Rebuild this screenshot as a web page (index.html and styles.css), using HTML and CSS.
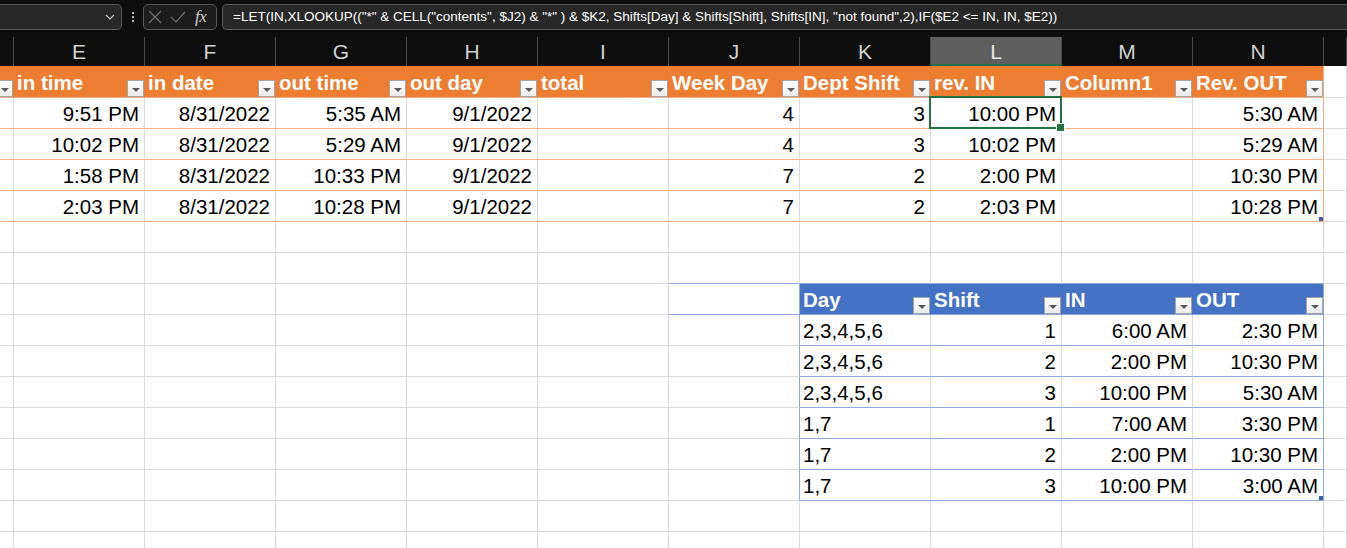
FILE: index.html
```html
<!DOCTYPE html>
<html lang="en">
<head>
<meta charset="utf-8">
<title>Sheet</title>
<link rel="stylesheet" href="styles.css">
</head>
<body>
<div class="fbar">
  <div class="namebox">
    <svg class="chev" width="10" height="6" viewBox="0 0 10 6"><path d="M1 1 L5 5 L9 1" fill="none" stroke="#c8c8c8" stroke-width="1.2"/></svg>
  </div>
  <div class="dots"><i></i><i></i><i></i></div>
  <div class="fxbox">
    <svg width="14" height="14" viewBox="0 0 14 14"><path d="M1 1 L13 13 M13 1 L1 13" stroke="#6f6f6f" stroke-width="1.2" fill="none"/></svg>
    <svg width="16" height="14" viewBox="0 0 16 14"><path d="M1 7 L6 12 L15 2" stroke="#6f6f6f" stroke-width="1.2" fill="none"/></svg>
    <span class="fx">fx</span>
  </div>
  <div class="formula">=LET(IN,XLOOKUP(("*" &amp; CELL("contents", $J2) &amp; "*" ) &amp; $K2, Shifts[Day] &amp; Shifts[Shift], Shifts[IN], "not found",2),IF($E2 &lt;= IN, IN, $E2))</div>
</div>

<div class="colhead">
  <div class="ch"></div>
  <div class="ch">E</div>
  <div class="ch">F</div>
  <div class="ch">G</div>
  <div class="ch">H</div>
  <div class="ch">I</div>
  <div class="ch">J</div>
  <div class="ch">K</div>
  <div class="ch sel">L</div>
  <div class="ch">M</div>
  <div class="ch">N</div>
  <div class="ch"></div>
</div>

<div class="sheet">
  <div class="row hrow">
    <div class="c oh"><span class="dd"></span></div>
    <div class="c oh"><span class="t">in time</span><span class="dd"></span></div>
    <div class="c oh"><span class="t">in date</span><span class="dd"></span></div>
    <div class="c oh"><span class="t">out time</span><span class="dd"></span></div>
    <div class="c oh"><span class="t">out day</span><span class="dd"></span></div>
    <div class="c oh"><span class="t">total</span><span class="dd"></span></div>
    <div class="c oh"><span class="t">Week Day</span><span class="dd"></span></div>
    <div class="c oh"><span class="t">Dept Shift</span><span class="dd"></span></div>
    <div class="c oh"><span class="t">rev. IN</span><span class="dd"></span></div>
    <div class="c oh"><span class="t">Column1</span><span class="dd"></span></div>
    <div class="c oh oe"><span class="t">Rev. OUT</span><span class="dd"></span></div>
    <div class="c"></div>
  </div>

  <div class="row orow">
    <div class="c"></div><div class="c">9:51 PM</div><div class="c">8/31/2022</div><div class="c">5:35 AM</div><div class="c">9/1/2022</div><div class="c"></div><div class="c">4</div><div class="c">3</div><div class="c cur">10:00 PM</div><div class="c"></div><div class="c oe">5:30 AM</div><div class="c"></div>
  </div>
  <div class="row orow">
    <div class="c"></div><div class="c">10:02 PM</div><div class="c">8/31/2022</div><div class="c">5:29 AM</div><div class="c">9/1/2022</div><div class="c"></div><div class="c">4</div><div class="c">3</div><div class="c">10:02 PM</div><div class="c"></div><div class="c oe">5:29 AM</div><div class="c"></div>
  </div>
  <div class="row orow">
    <div class="c"></div><div class="c">1:58 PM</div><div class="c">8/31/2022</div><div class="c">10:33 PM</div><div class="c">9/1/2022</div><div class="c"></div><div class="c">7</div><div class="c">2</div><div class="c">2:00 PM</div><div class="c"></div><div class="c oe">10:30 PM</div><div class="c"></div>
  </div>
  <div class="row orow">
    <div class="c"></div><div class="c">2:03 PM</div><div class="c">8/31/2022</div><div class="c">10:28 PM</div><div class="c">9/1/2022</div><div class="c"></div><div class="c">7</div><div class="c">2</div><div class="c">2:03 PM</div><div class="c"></div><div class="c oe grip">10:28 PM</div><div class="c"></div>
  </div>

  <div class="row">
    <div class="c"></div><div class="c"></div><div class="c"></div><div class="c"></div><div class="c"></div><div class="c"></div><div class="c"></div><div class="c"></div><div class="c"></div><div class="c"></div><div class="c"></div><div class="c"></div>
  </div>
  <div class="row">
    <div class="c"></div><div class="c"></div><div class="c"></div><div class="c"></div><div class="c"></div><div class="c"></div><div class="c bb"></div><div class="c bb"></div><div class="c bb"></div><div class="c bb"></div><div class="c bb"></div><div class="c"></div>
  </div>

  <div class="row">
    <div class="c"></div><div class="c"></div><div class="c"></div><div class="c"></div><div class="c"></div><div class="c"></div>
    <div class="c bb br"></div>
    <div class="c bh"><span class="t">Day</span><span class="dd"></span></div>
    <div class="c bh"><span class="t">Shift</span><span class="dd"></span></div>
    <div class="c bh"><span class="t">IN</span><span class="dd"></span></div>
    <div class="c bh be"><span class="t">OUT</span><span class="dd"></span></div>
    <div class="c"></div>
  </div>

  <div class="row brow">
    <div class="c"></div><div class="c"></div><div class="c"></div><div class="c"></div><div class="c"></div><div class="c"></div><div class="c j"></div><div class="c l">2,3,4,5,6</div><div class="c">1</div><div class="c">6:00 AM</div><div class="c be">2:30 PM</div><div class="c"></div>
  </div>
  <div class="row brow">
    <div class="c"></div><div class="c"></div><div class="c"></div><div class="c"></div><div class="c"></div><div class="c"></div><div class="c j"></div><div class="c l">2,3,4,5,6</div><div class="c">2</div><div class="c">2:00 PM</div><div class="c be">10:30 PM</div><div class="c"></div>
  </div>
  <div class="row brow">
    <div class="c"></div><div class="c"></div><div class="c"></div><div class="c"></div><div class="c"></div><div class="c"></div><div class="c j"></div><div class="c l">2,3,4,5,6</div><div class="c">3</div><div class="c">10:00 PM</div><div class="c be">5:30 AM</div><div class="c"></div>
  </div>
  <div class="row brow">
    <div class="c"></div><div class="c"></div><div class="c"></div><div class="c"></div><div class="c"></div><div class="c"></div><div class="c j"></div><div class="c l">1,7</div><div class="c">1</div><div class="c">7:00 AM</div><div class="c be">3:30 PM</div><div class="c"></div>
  </div>
  <div class="row brow">
    <div class="c"></div><div class="c"></div><div class="c"></div><div class="c"></div><div class="c"></div><div class="c"></div><div class="c j"></div><div class="c l">1,7</div><div class="c">2</div><div class="c">2:00 PM</div><div class="c be">10:30 PM</div><div class="c"></div>
  </div>
  <div class="row brow">
    <div class="c"></div><div class="c"></div><div class="c"></div><div class="c"></div><div class="c"></div><div class="c"></div><div class="c j"></div><div class="c l">1,7</div><div class="c">3</div><div class="c">10:00 PM</div><div class="c be grip">3:00 AM</div><div class="c"></div>
  </div>

  <div class="row">
    <div class="c"></div><div class="c"></div><div class="c"></div><div class="c"></div><div class="c"></div><div class="c"></div><div class="c"></div><div class="c"></div><div class="c"></div><div class="c"></div><div class="c"></div><div class="c"></div>
  </div>
  <div class="row">
    <div class="c"></div><div class="c"></div><div class="c"></div><div class="c"></div><div class="c"></div><div class="c"></div><div class="c"></div><div class="c"></div><div class="c"></div><div class="c"></div><div class="c"></div><div class="c"></div>
  </div>
</div>
</body>
</html>
```

FILE: styles.css
```css
* {
  box-sizing: border-box;
  margin: 0;
  padding: 0;
}

html, body {
  width: 1347px;
  height: 548px;
  overflow: hidden;
  background: #ffffff;
}

body {
  font-family: "Liberation Sans", Arial, sans-serif;
}

/* ---------- formula bar ---------- */
.fbar {
  height: 31px;
  background: #0e0e0e;
  display: flex;
  align-items: flex-start;
  padding-top: 4px;
}

.namebox {
  width: 122px;
  height: 26px;
  flex: none;
  background: #282828;
  border: 1px solid #5a5a5a;
  border-left: none;
  border-radius: 0 5px 5px 0;
  display: flex;
  align-items: center;
  justify-content: flex-end;
  padding-right: 6px;
}

.dots {
  width: 21px;
  height: 26px;
  flex: none;
  display: flex;
  flex-direction: column;
  align-items: center;
  justify-content: center;
  gap: 2px;
}

.dots i {
  display: block;
  width: 2px;
  height: 2px;
  background: #b5b5b5;
}

.fxbox {
  width: 74px;
  height: 26px;
  flex: none;
  background: #1d1d1d;
  border: 1px solid #5a5a5a;
  border-radius: 5px;
  display: flex;
  align-items: center;
  padding-left: 4px;
  gap: 8px;
}

.fx {
  font-family: "Liberation Serif", "Times New Roman", serif;
  font-style: italic;
  font-size: 17px;
  color: #d0d0d0;
  letter-spacing: -0.5px;
  margin-left: 1px;
}

.formula {
  flex: 1;
  height: 26px;
  margin-left: 5px;
  background: #282828;
  border: 1px solid #5a5a5a;
  border-right: none;
  border-radius: 5px 0 0 5px;
  color: #ffffff;
  font-size: 13.5px;
  line-height: 24px;
  padding-left: 10px;
  white-space: nowrap;
  overflow: hidden;
}

/* ---------- column headers ---------- */
.colhead {
  display: grid;
  grid-template-columns: 14px repeat(10, 131px) 1fr;
  height: 35px;
  background: #0e0e0e;
  padding-top: 6px;
}

.ch {
  height: 29px;
  border-right: 1px solid #474747;
  color: #d2d2d2;
  text-align: center;
  font-size: 21px;
  line-height: 27px;
  padding-top: 1px;
}

.ch.sel {
  background: #5f5f5f;
  border-bottom: 2px solid #217346;
  color: #e6e6e6;
}

/* ---------- sheet ---------- */
.row {
  display: grid;
  grid-template-columns: 14px repeat(10, 131px) 1fr;
  height: 31px;
}

.c {
  position: relative;
  border-right: 1px solid #dadada;
  border-bottom: 1px solid #dadada;
  display: flex;
  align-items: flex-end;
  justify-content: flex-end;
  padding: 0 5px 3px 3px;
  font-size: 20.5px;
  line-height: 23px;
  color: #000000;
  white-space: nowrap;
  overflow: hidden;
}

.c.l {
  justify-content: flex-start;
}

/* orange table */
.hrow {
  height: 32px;
}

.oh {
  background: #ed7d31;
  border-right-color: #ed7d31;
  border-bottom-color: #f4b084;
  color: #ffffff;
  font-weight: bold;
  justify-content: space-between;
  padding: 0 0 0 3px;
}

.oh:first-child {
  justify-content: flex-end;
  padding: 0;
}

.oh .t,
.bh .t {
  padding-bottom: 3px;
}

.orow .c {
  border-bottom-color: #f4b084;
}

.orow .c:last-child {
  border-bottom-color: #dadada;
}

.c.oe {
  border-right-color: #f4b084;
}

/* blue table */
.c.bb {
  border-bottom-color: #8ea9db;
}

.c.br,
.c.j {
  border-right-color: #8ea9db;
}

.bh {
  background: #4472c4;
  border-right-color: #4472c4;
  border-bottom-color: #8ea9db;
  color: #ffffff;
  font-weight: bold;
  justify-content: space-between;
  padding: 0 0 0 3px;
}

.brow .c {
  border-bottom-color: #8ea9db;
}

.brow .c:nth-child(-n+7),
.brow .c:last-child {
  border-bottom-color: #dadada;
}

.c.be {
  border-right-color: #8ea9db;
}

/* filter dropdown button */
.dd {
  flex: none;
  width: 17px;
  height: 17px;
  border: 1px solid #a3a3a3;
  background: linear-gradient(#ffffff, #ebebeb);
  display: flex;
  align-items: center;
  justify-content: center;
}

.dd::after {
  content: "";
  display: block;
  margin-top: 2px;
  border-left: 4px solid transparent;
  border-right: 4px solid transparent;
  border-top: 4px solid #5a5a5a;
}

/* active cell */
.c.cur {
  overflow: visible;
  z-index: 2;
}

.c.cur::before {
  content: "";
  position: absolute;
  left: -2px;
  top: -2px;
  right: -1px;
  bottom: -1px;
  border: 2px solid #217346;
}

.c.cur::after {
  content: "";
  position: absolute;
  right: -4px;
  bottom: -4px;
  width: 7px;
  height: 7px;
  background: #217346;
  border: 1px solid #ffffff;
}

/* table resize grip */
.c.grip::after {
  content: "";
  position: absolute;
  right: 0;
  bottom: 0;
  width: 4px;
  height: 4px;
  background: #3f5bb8;
}
```
